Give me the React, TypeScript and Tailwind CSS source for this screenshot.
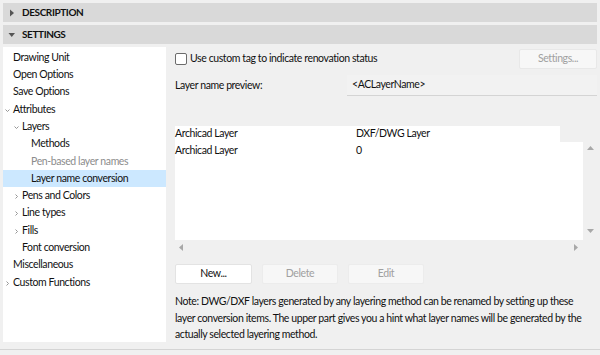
import React from 'react';

type Node = { label: string; indent: number; chevron?: 'open' | 'closed'; muted?: boolean; selected?: boolean };

const tree: Node[] = [
  { label: 'Drawing Unit', indent: 0 },
  { label: 'Open Options', indent: 0 },
  { label: 'Save Options', indent: 0 },
  { label: 'Attributes', indent: 0, chevron: 'open' },
  { label: 'Layers', indent: 1, chevron: 'open' },
  { label: 'Methods', indent: 2 },
  { label: 'Pen-based layer names', indent: 2, muted: true },
  { label: 'Layer name conversion', indent: 2, selected: true },
  { label: 'Pens and Colors', indent: 1, chevron: 'closed' },
  { label: 'Line types', indent: 1, chevron: 'closed' },
  { label: 'Fills', indent: 1, chevron: 'closed' },
  { label: 'Font conversion', indent: 1 },
  { label: 'Miscellaneous', indent: 0 },
  { label: 'Custom Functions', indent: 0, chevron: 'closed' },
];

const indentClass = ['pl-[10px]', 'pl-[19px]', 'pl-[28px]'];

const Chevron = ({ open }: { open: boolean }) => (
  <svg width="5" height="5" viewBox="0 0 5 5" className="absolute -left-[8px] top-[5px]">
    {open ? (
      <path d="M0.5 1.5 L2.5 3.5 L4.5 1.5" fill="none" stroke="#8a8a8a" strokeWidth="0.9" />
    ) : (
      <path d="M1.5 0.5 L3.5 2.5 L1.5 4.5" fill="none" stroke="#8a8a8a" strokeWidth="0.9" />
    )}
  </svg>
);

const SectionHeader = ({ title, open }: { title: string; open: boolean }) => (
  <div className="flex items-center h-[19px] bg-[#d9d9d9] pl-[5px]">
    <svg width="8" height="8" viewBox="0 0 8 8" className="mr-[6px]">
      {open ? <path d="M0.5 2 L7 2 L3.75 6 Z" fill="#555" /> : <path d="M2 0.5 L6 4 L2 7.5 Z" fill="#555" />}
    </svg>
    <span className="text-[10px] font-bold text-[#111] tracking-[-0.4px]">{title}</span>
  </div>
);

const Tri = ({ dir }: { dir: 'up' | 'down' | 'left' | 'right' }) => {
  const d = {
    up: 'M0 5 L3.5 1 L7 5 Z',
    down: 'M0 1 L3.5 5 L7 1 Z',
    left: 'M5 0 L1 3.5 L5 7 Z',
    right: 'M1 0 L5 3.5 L1 7 Z',
  }[dir];
  return (
    <svg width="7" height="7" viewBox="0 0 7 7">
      <path d={d} fill="#a8a8a8" />
    </svg>
  );
};

export default function App() {
  return (
    <div
      className="w-[600px] h-[355px] bg-[#f0f0f0] overflow-hidden text-[#111] text-[10.5px] tracking-[-0.4px]"
      style={{ fontFamily: 'Lato, sans-serif' }}
    >
      <div className="px-[3px] pt-[3px]">
        <SectionHeader title="DESCRIPTION" open={false} />
        <div className="mt-[3px]">
          <SectionHeader title="SETTINGS" open={true} />
        </div>

        <div className="flex mt-[3px]">
          {/* Tree */}
          <div className="w-[163px] h-[295px] bg-white pt-[2px]">
            {tree.map((n) => (
              <div
                key={n.label}
                className={`h-[17.3px] flex items-center ${n.selected ? 'bg-[#cce8ff]' : ''}`}
              >
                <div className={`relative ${indentClass[n.indent]}`}>
                  <span className={`relative ${n.muted ? 'text-[#8c8c8c]' : ''}`}>
                    {n.chevron && <Chevron open={n.chevron === 'open'} />}
                    {n.label}
                  </span>
                </div>
              </div>
            ))}
          </div>

          {/* Content */}
          <div className="flex-1 pl-[9px]">
            <div className="flex items-center justify-between h-[20px] mt-[2px]">
              <label className="flex items-center gap-[3px]">
                <span className="w-[12px] h-[12px] border border-[#6b6b6b] rounded-[2px] bg-white" />
                <span>Use custom tag to indicate renovation status</span>
              </label>
              <button className="w-[78px] h-[20px] bg-[#f7f7f7] border border-[#e8e8e8] text-[#a0a0a0] rounded-[2px]">
                Settings...
              </button>
            </div>

            <div className="flex items-center h-[21px] mt-[6px]">
              <span className="w-[172px]">Layer name preview:</span>
              <div className="flex-1 h-[21px] flex items-center pl-[5px] bg-[#f2f2f2] border-b border-[#d4d4d4]">
                &lt;ACLayerName&gt;
              </div>
            </div>

            {/* Table */}
            <div className="mt-[30px]">
              <div className="flex w-[385px] h-[16px] bg-white items-center">
                <span className="w-[181px]">Archicad Layer</span>
                <span>DXF/DWG Layer</span>
              </div>
              <div className="flex">
                <div className="w-[408px] h-[98px] bg-white">
                  <div className="flex h-[18px] items-center">
                    <span className="w-[181px]">Archicad Layer</span>
                    <span>0</span>
                  </div>
                </div>
                <div className="flex-1 flex flex-col items-center justify-between pt-[3px] pb-[5px]">
                  <Tri dir="up" />
                  <Tri dir="down" />
                </div>
              </div>
              <div className="flex w-[408px] h-[14px] items-center justify-between px-[3px]">
                <Tri dir="left" />
                <Tri dir="right" />
              </div>
            </div>

            <div className="flex gap-[10px] mt-[10px]">
              <button className="w-[77px] h-[20px] bg-white border border-[#e3e3e3] rounded-[2px]">New...</button>
              <button className="w-[76px] h-[20px] bg-[#f7f7f7] border border-[#ececec] text-[#a0a0a0] rounded-[2px]">
                Delete
              </button>
              <button className="w-[76px] h-[20px] bg-[#f7f7f7] border border-[#ececec] text-[#a0a0a0] rounded-[2px]">
                Edit
              </button>
            </div>

            <p className="mt-[9px] leading-[16.5px] pr-[6px]">
              Note: DWG/DXF layers generated by any layering method can be renamed by setting up these layer conversion
              items. The upper part gives you a hint what layer names will be generated by the actually selected
              layering method.
            </p>
          </div>
        </div>
      </div>
      <div className="mt-[6px] h-px bg-[#d4d4d4]" />
    </div>
  );
}
